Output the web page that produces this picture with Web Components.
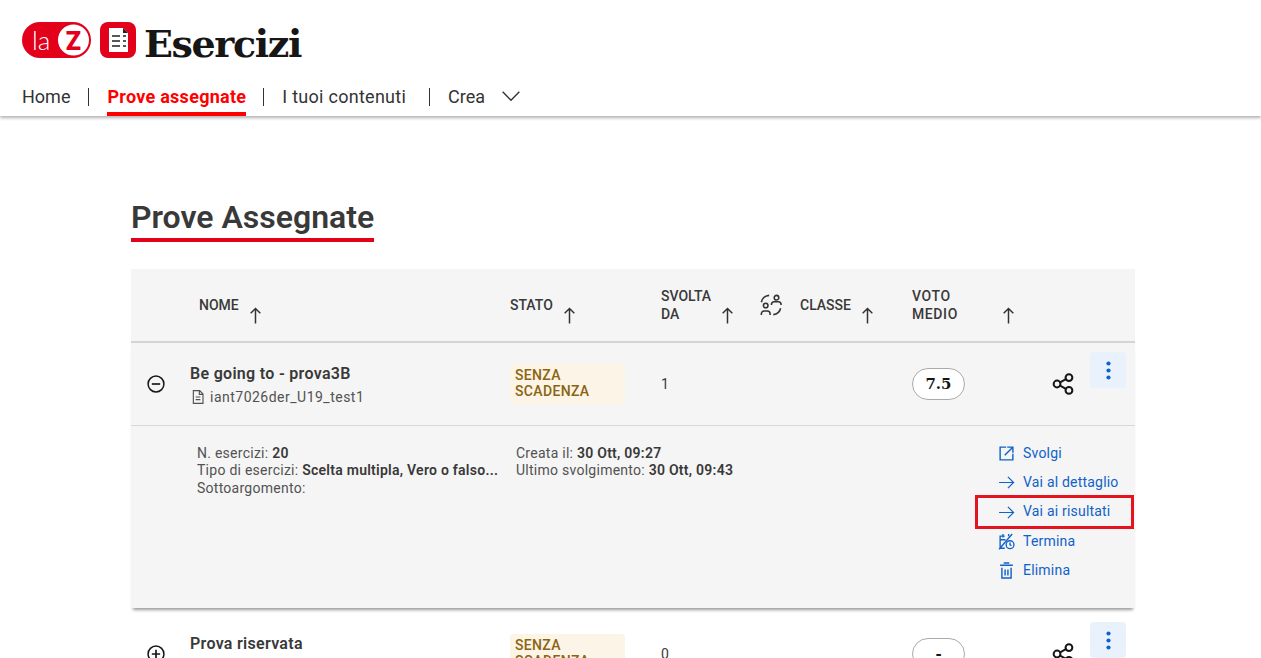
<!DOCTYPE html>
<html lang="it">
<head>
<meta charset="utf-8">
<title>Esercizi</title>
<style>
  html, body { margin: 0; height: 100%; overflow: hidden; background: #fff; }
  body { font-family: "Roboto", "Liberation Sans", sans-serif; color: #333; }
</style>
</head>
<body>
<app-header></app-header>
<page-main>
  <page-title>Prove Assegnate</page-title>
  <test-table>
    <test-row name="Be going to - prova3B" code="iant7026der_U19_test1" done="1" score="7.5" open>
      <detail-info slot="detail"></detail-info>
    </test-row>
    <test-row name="Prova riservata" code="" done="0" score="-"></test-row>
  </test-table>
</page-main>

<script>
// shared icons, all drawn on a 24 box
const ICONS = {
  up: '<path d="M12 21V4M6.5 9.5 12 4l5.5 5.5" fill="none" stroke="currentColor" stroke-width="1.7"/>',
  right: '<path d="M1.5 12h20.500M14 4l8 8-8 8" fill="none" stroke="currentColor" stroke-width="1.7"/>',
  chevron: '<path d="M2 7l10 10L22 7" fill="none" stroke="currentColor" stroke-width="1.7"/>',
  minus: '<circle cx="12" cy="12" r="9.5" fill="none" stroke="currentColor" stroke-width="1.8"/><path d="M7 12h10" stroke="currentColor" stroke-width="2"/>',
  plus: '<circle cx="12" cy="12" r="9.5" fill="none" stroke="currentColor" stroke-width="1.8"/><path d="M7 12h10M12 7v10" stroke="currentColor" stroke-width="2"/>',
  share: '<g fill="none" stroke="currentColor" stroke-width="2.2"><circle cx="5.5" cy="12" r="3.7"/><circle cx="18.5" cy="5" r="3.7"/><circle cx="18.5" cy="19" r="3.7"/><path d="M8.8 10.2l6.4-3.4M8.8 13.8l6.4 3.4"/></g>',
  dots: '<circle cx="12" cy="4" r="2.4" fill="currentColor"/><circle cx="12" cy="12" r="2.4" fill="currentColor"/><circle cx="12" cy="20" r="2.4" fill="currentColor"/>',
  doc: '<path d="M5 2.5h9.5L19.5 7.5V21.5H5z M14 2.5V8h5.5M8.5 12h7M8.5 16h7" fill="none" stroke="currentColor" stroke-width="1.7"/>',
  open: '<path d="M11.500 3H3v18h18v-8.500M9.500 14.500 20.500 3.500M13 3h8v8" fill="none" stroke="currentColor" stroke-width="2"/>',
  stop: '<g fill="none" stroke="currentColor" stroke-width="1.9"><path d="M9.500 4.500H3v17h6.500M3 9.500h7.500M7 1.500v5M15 1.500v3M1.500 23 20 1.500"/><circle cx="17" cy="16.500" r="5.500"/><path d="M17 13.500v3.200l2 1.200"/></g>',
  trash: '<path d="M3 4.500h18M8 1.500h8M5.500 8v14.500h13V8M10 10.500v8.500M14 10.500v8.500" fill="none" stroke="currentColor" stroke-width="2"/>',
  group: '<g fill="none" stroke="currentColor" stroke-width="1.7"><circle cx="18" cy="4" r="2.500"/><circle cx="6.200" cy="12.600" r="2.500"/><path d="M1.500 23v-1.500a3 3 0 0 1 3-3H8a3 3 0 0 1 3 3V23M12.500 12v-.5a3 3 0 0 1 3-3H20a3 3 0 0 1 3 3v.5M1.500 9A9 9 0 0 1 10 1.500M22.500 15.500A9 9 0 0 1 14.500 22.500"/></g>'
};

class UiIcon extends HTMLElement {
  connectedCallback() {
    const size = this.getAttribute('size') || 16;
    this.attachShadow({mode: 'open'}).innerHTML = `
      <style>:host{display:inline-flex;flex:none;width:${size}px;height:${size}px} svg{width:100%;height:100%;display:block}</style>
      <svg viewBox="0 0 24 24">${ICONS[this.getAttribute('name')]}</svg>`;
  }
}
customElements.define('ui-icon', UiIcon);

let headerTemplate = document.createElement('template');
headerTemplate.innerHTML = `
  <style>
    :host { display: block; height: 116px; box-sizing: border-box; padding: 22px 22px 0; background: #fff;
            box-shadow: 0 2px 3px rgba(0,0,0,.3); position: relative; }
    .brand { display: flex; align-items: center; height: 36px; }
    .brand svg { display: block; flex: none; }
    .brand .doc { margin-left: 9px; }
    .name { margin: 7px 0 0 8px; font: 700 38px/36px "DejaVu Serif", serif; letter-spacing: -1.4px; color: #161616; }
    nav { display: flex; align-items: flex-start; margin-top: 27px; font-size: 18px; line-height: 24px; color: #333; }
    a { display: block; height: 31px; box-sizing: border-box; white-space: nowrap; }
    .sep { width: 1px; height: 18px; background: #333; margin: 3px 19px 0 18px; }
    .on { color: #f00; font-weight: 700; border-bottom: 4px solid #f00; letter-spacing: .27px; margin: 0 -1px 0 -1px; }
    .mid { margin-right: 18px; }
    .wide { letter-spacing: .27px; }
    .last { margin: 3px 18px 0 23px; }
    .more { margin: 1px 0 0 16px; color: #333; }
  </style>
  <div class="brand">
    <svg width="69" height="36" viewBox="0 0 69 36">
      <rect width="69" height="36" rx="18" fill="#e2001a"/>
      <text x="10" y="28" font-family="Lato, sans-serif" font-weight="300" font-size="26" fill="#fff">la</text>
      <circle cx="51.500" cy="18" r="15.500" fill="#fff"/>
      <text x="51.500" y="28" text-anchor="middle" font-family="Roboto, sans-serif" font-weight="900" font-size="25" fill="#e2001a">Z</text>
    </svg>
    <svg class="doc" width="36" height="36" viewBox="0 0 36 36">
      <rect width="36" height="36" rx="8" fill="#e2001a"/>
      <path d="M9 6h14l5 5v19H9z" fill="#fff"/>
      <path d="M23 6l5 5h-5z" fill="#222"/>
      <path d="M12 14h8M12 19h8M12 24h8M23 14h3M23 19h3M23 24h3" stroke="#222" stroke-width="1.600" fill="none"/>
    </svg>
    <span class="name">Esercizi</span>
  </div>
  <nav>
    <a>Home</a><span class="sep"></span>
    <a class="on">Prove assegnate</a><span class="sep mid"></span>
    <a class="wide">I tuoi contenuti</a><span class="sep last"></span>
    <a>Crea</a>
    <ui-icon class="more" name="chevron" size="20"></ui-icon>
  </nav>`;

class AppHeader extends HTMLElement {
  constructor() {
    super();
    this.attachShadow({mode: 'open'}).appendChild(headerTemplate.content.cloneNode(true));
  }
}
customElements.define('app-header', AppHeader);

class PageMain extends HTMLElement {
  constructor() {
    super();
    this.attachShadow({mode: 'open'}).innerHTML = `
      <style>:host{display:block;padding:83px 126px 0 131px}</style><slot></slot>`;
  }
}
customElements.define('page-main', PageMain);

class PageTitle extends HTMLElement {
  constructor() {
    super();
    this.attachShadow({mode: 'open'}).innerHTML = `
      <style>
        :host{display:block;margin-bottom:27px}
        h1{display:inline-block;margin:0;font-size:32px;line-height:36px;font-weight:600;color:#393939;
           border-bottom:4px solid #e2001a;height:39px}
      </style><h1><slot></slot></h1>`;
  }
}
customElements.define('page-title', PageTitle);

const COLUMNS = '59px 320px 151px 99px 152px 129px 49px 1fr';

class SortHead extends HTMLElement {
  connectedCallback() {
    const gap = this.getAttribute('gap') || 6;
    this.attachShadow({mode: 'open'}).innerHTML = `
      <style>
        :host{display:flex;align-items:center;height:36px;font-size:14px;line-height:18px;font-weight:500;color:#393939}
        ui-icon{align-self:flex-start;margin:18px 0 0 ${gap}px;color:#333}
      </style><span><slot></slot></span><ui-icon name="up" size="21"></ui-icon>`;
  }
}
customElements.define('sort-head', SortHead);

let tableTemplate = document.createElement('template');
tableTemplate.innerHTML = `
  <style>
    :host{display:block}
    .head{display:grid;grid-template-columns:${COLUMNS};height:72px;background:#f5f5f5;border-bottom:2px solid #d4d4d4}
    .head > *{margin-top:18px}
    .nome{grid-column:2;padding-left:9px}
    .stato{grid-column:3}
    .svolta{grid-column:4}
    .classe{grid-column:5;display:flex;align-items:center;gap:18px;height:36px}
    .voto{grid-column:6;letter-spacing:.6px}
  </style>
  <div class="head">
    <sort-head class="nome">NOME</sort-head>
    <sort-head class="stato">STATO</sort-head>
    <sort-head class="svolta">SVOLTA<br>DA</sort-head>
    <div class="classe"><ui-icon name="group" size="22"></ui-icon><sort-head>CLASSE</sort-head></div>
    <sort-head class="voto" gap="40">VOTO<br>MEDIO</sort-head>
  </div>
  <slot></slot>`;

class TestTable extends HTMLElement {
  constructor() {
    super();
    this.attachShadow({mode: 'open'}).appendChild(tableTemplate.content.cloneNode(true));
  }
}
customElements.define('test-table', TestTable);

class TestRow extends HTMLElement {
  connectedCallback() {
    const isOpen = this.hasAttribute('open');
    const code = this.getAttribute('code');
    this.attachShadow({mode: 'open'}).innerHTML = `
      <style>
        :host{display:block;${isOpen ? 'background:#f5f5f5;box-shadow:0 4px 3px -2px rgba(0,0,0,.4);margin-bottom:5px;' : ''}}
        .row{display:grid;grid-template-columns:${COLUMNS};height:82px;align-items:center;font-size:14px;color:#393939}
        .toggle{padding-left:15px;display:flex;color:#161616}
        .name{font-size:16px;line-height:20px;font-weight:600;letter-spacing:.3px;padding-top:1px}
        .code{display:flex;align-items:center;gap:4px;height:18px;margin-top:4px;font-size:14px;line-height:18px;color:#525252;letter-spacing:.49px}
        .chip{width:115px;height:40px;box-sizing:border-box;padding:3px 4px 5px 5px;border-radius:4px;background:#fcf4e6;color:#8a6410;
              font-size:14px;line-height:16px;font-weight:500;letter-spacing:.35px}
        .score{grid-column:6;width:53px;height:32px;box-sizing:border-box;border:1px solid #aaa;border-radius:16px;background:#fff;
               display:flex;align-items:center;justify-content:center;font:700 15px "DejaVu Serif",serif;color:#161616}
        .share{grid-column:7;padding-left:11px;display:flex;color:#161616}
        .kebab{grid-column:8;align-self:start;justify-self:start;margin-top:9px;width:36px;height:36px;border-radius:4px;background:#e9f2fc;
               color:#0f62c9;display:flex;align-items:center;justify-content:center}
        .detail{border-top:1px solid #d8d8d8;height:183px;box-sizing:border-box}
      </style>
      <div class="row">
        <div class="toggle"><ui-icon name="${isOpen ? 'minus' : 'plus'}" size="20"></ui-icon></div>
        <div>
          <div class="name">${this.getAttribute('name')}</div>
          <div class="code">${code ? `<ui-icon name="doc" size="16"></ui-icon>${code}` : ''}</div>
        </div>
        <div><div class="chip">SENZA<br>SCADENZA</div></div>
        <div>${this.getAttribute('done')}</div>
        <div class="score">${this.getAttribute('score')}</div>
        <div class="share"><ui-icon name="share" size="22"></ui-icon></div>
        <div class="kebab"><ui-icon name="dots" size="21"></ui-icon></div>
      </div>
      ${isOpen ? '<div class="detail"><slot name="detail"></slot></div>' : ''}`;
  }
}
customElements.define('test-row', TestRow);

class ActionLink extends HTMLElement {
  connectedCallback() {
    this.attachShadow({mode: 'open'}).innerHTML = `
      <style>
        :host{display:flex;align-items:center;gap:8px;height:29.25px;font-size:14px;letter-spacing:.2px;color:#0f62c9;position:relative}
        .mark{position:absolute;left:-23px;top:-2.5px;width:159px;height:34px;box-sizing:border-box;border:3px solid #e3141f}
      </style>
      <ui-icon name="${this.getAttribute('icon')}" size="17"></ui-icon><slot></slot>
      ${this.hasAttribute('marked') ? '<span class="mark"></span>' : ''}`;
  }
}
customElements.define('action-link', ActionLink);

let detailTemplate = document.createElement('template');
detailTemplate.innerHTML = `
  <style>
    :host{display:grid;grid-template-columns:319px 482px 1fr;padding:18.6px 0 0 66px;font-size:14px;line-height:17.5px;letter-spacing:.26px;color:#525252}
    b{font-weight:600;color:#393939}
    .one{white-space:nowrap}
    .acts{margin-top:-5.6px}
  </style>
  <div>
    <div class="one">N. esercizi: <b>20</b></div>
    <div class="one">Tipo di esercizi: <b>Scelta multipla, Vero o falso...</b></div>
    <div class="one">Sottoargomento:</div>
  </div>
  <div>
    <div class="one">Creata il: <b>30 Ott, 09:27</b></div>
    <div class="one">Ultimo svolgimento: <b>30 Ott, 09:43</b></div>
  </div>
  <div class="acts">
    <action-link icon="open">Svolgi</action-link>
    <action-link icon="right">Vai al dettaglio</action-link>
    <action-link icon="right" marked>Vai ai risultati</action-link>
    <action-link icon="stop">Termina</action-link>
    <action-link icon="trash">Elimina</action-link>
  </div>`;

class DetailInfo extends HTMLElement {
  constructor() {
    super();
    this.attachShadow({mode: 'open'}).appendChild(detailTemplate.content.cloneNode(true));
  }
}
customElements.define('detail-info', DetailInfo);
</script>
</body>
</html>
